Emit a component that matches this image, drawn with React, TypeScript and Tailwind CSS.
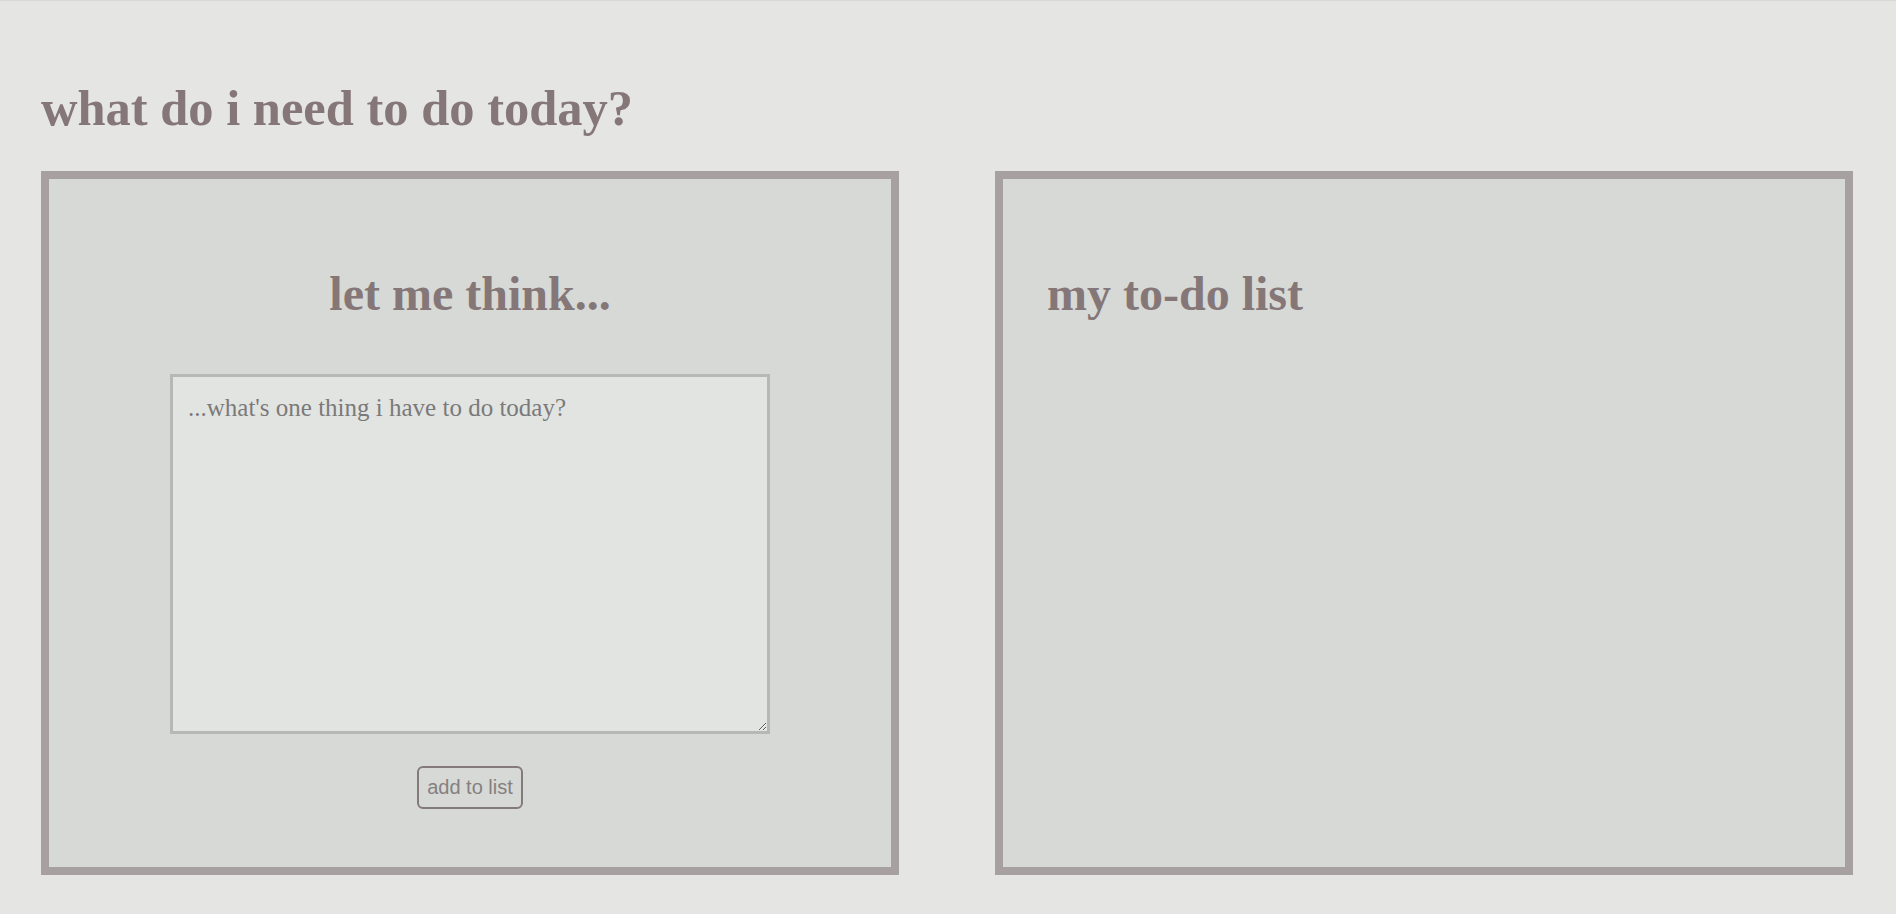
import { useState } from "react";

const serif = "font-['Liberation_Serif','Times_New_Roman',serif]";

export default function App() {
  const [draft, setDraft] = useState("");

  return (
    <div className="min-h-screen border-t border-[#d8d8d6] bg-[#e5e5e3] pl-[41px] pr-[43px] pb-[39px]">
      <h1 className={`${serif} pt-[79px] text-[50.5px] font-bold leading-[56px] text-[#857777]`}>
        what do i need to do today?
      </h1>

      <div className="mt-[35px] grid grid-cols-2 gap-[96px]">
        <section className="flex h-[704px] flex-col items-center border-8 border-[#a6a1a0] bg-[#d7d9d6] pt-[88px]">
          <h2 className={`${serif} text-[48px] font-bold leading-[54px] text-[#857777]`}>
            let me think...
          </h2>
          <textarea
            value={draft}
            onChange={(e) => setDraft(e.target.value)}
            placeholder="...what's one thing i have to do today?"
            className={`${serif} mt-[53px] h-[360px] w-[600px] border-[3px] border-[#b6b8b5] bg-[#e2e4e1] px-[15px] pt-[17px] text-[25px] leading-[28px] text-[#6f6f6f] outline-none placeholder:text-[#7a7a7a]`}
          />
          <button
            type="button"
            className="mt-[32px] rounded-md border-2 border-[#857a7a] p-2 font-['Liberation_Sans',Arial,sans-serif] text-[20px] leading-[23px] text-[#858080]"
          >
            add to list
          </button>
        </section>

        <section className="h-[704px] border-8 border-[#a6a1a0] bg-[#d7d9d6] pl-[44px] pt-[88px]">
          <h2 className={`${serif} text-[48px] font-bold leading-[54px] text-[#857777]`}>
            my to-do list
          </h2>
        </section>
      </div>
    </div>
  );
}
